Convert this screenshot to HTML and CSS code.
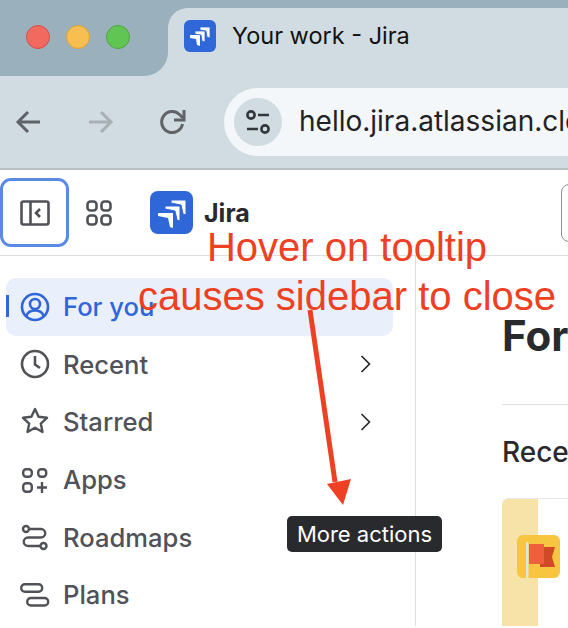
FILE: index.html
```html
<!DOCTYPE html>
<html lang="en">
<head>
    <meta charset="UTF-8">
    <meta name="viewport" content="width=device-width, initial-scale=1.0">
    <title>Your work - Jira</title>
    <link rel="stylesheet" href="styles.css">
</head>
<body>
    <!-- Browser chrome -->
    <div class="tabstrip">
        <div class="traffic">
            <span class="light red"></span>
            <span class="light yellow"></span>
            <span class="light green"></span>
        </div>
        <div class="tab-wrap">
            <div class="tab">
                <svg class="favicon" viewBox="0 0 32 32">
                    <rect width="32" height="32" rx="6" fill="#2f66d8"/>
                    <path d="M6 15h10v11l-3-1-1-6-6-1z" fill="#fff"/>
                    <path d="M11 11h10v11l-3-1-1-6-6-1z" fill="#fff" stroke="#2f66d8" stroke-width=".8"/>
                    <path d="M16 7h10v11l-3-1-1-6-6-1z" fill="#fff" stroke="#2f66d8" stroke-width=".8"/>
                </svg>
                <span class="tab-title">Your work - Jira</span>
            </div>
        </div>
    </div>
    <div class="toolbar">
        <svg class="nav-arrow" viewBox="0 0 28 28"><path d="M25 14H4M13 4L3 14l10 10" fill="none" stroke="#5f6368" stroke-width="3"/></svg>
        <svg class="nav-arrow fwd" viewBox="0 0 28 28"><path d="M3 14h21M15 4l10 10-10 10" fill="none" stroke="#a8afb5" stroke-width="3"/></svg>
        <svg class="nav-arrow reload" viewBox="0 0 28 28"><path d="M23.500 16a10.500 10.500 0 1 1-3-9.500L24 10" fill="none" stroke="#5f6368" stroke-width="3"/><path d="M25 2v10H15" fill="none" stroke="#5f6368" stroke-width="3"/></svg>
        <div class="urlbar">
            <span class="site-info">
                <svg viewBox="0 0 26 26" width="26" height="26" fill="none" stroke="#33373b" stroke-width="2.600">
                    <circle cx="6" cy="6" r="3.600"/><path d="M13 6h11M2 20h11"/><circle cx="20" cy="20" r="3.600"/>
                </svg>
            </span>
            <span class="url">hello.jira.atlassian.cloud</span>
        </div>
    </div>

    <!-- Jira top bar -->
    <header class="topbar">
        <button class="icon-btn focused">
            <svg viewBox="0 0 30 26" width="30" height="26" fill="none" stroke="#505258" stroke-width="2.600">
                <rect x="1.500" y="1.500" width="27" height="23" rx="2"/><path d="M10.500 2v22M20 9l-4 4 4 4"/>
            </svg>
        </button>
        <svg class="apps-icon" viewBox="0 0 26 26" fill="none" stroke="#505258" stroke-width="2.600">
            <rect x="1.500" y="1.500" width="9" height="9" rx="3"/><rect x="15.500" y="1.500" width="9" height="9" rx="3"/>
            <rect x="1.500" y="15.500" width="9" height="9" rx="3"/><rect x="15.500" y="15.500" width="9" height="9" rx="3"/>
        </svg>
        <svg class="logo" viewBox="0 0 43 43">
            <rect width="43" height="43" rx="8" fill="#2f66d8"/>
            <path d="M8 22h15v15l-3-1-2-9-10-2z" fill="#fff"/>
            <path d="M15 15h15v15l-3-1-2-9-10-2z" fill="#fff" stroke="#2f66d8"/>
            <path d="M21 9h15v15l-3-1-2-9-10-2z" fill="#fff" stroke="#2f66d8"/>
        </svg>
        <span class="brand">Jira</span>
        <div class="search-edge"></div>
    </header>

    <div class="content">
        <nav class="sidebar">
            <a class="nav-item active">
                <svg viewBox="0 0 30 30" fill="none" stroke="#2f66d8" stroke-width="2.600"><circle cx="15" cy="15" r="13"/><circle cx="15" cy="12" r="5"/><path d="M6.500 24c1-4 4-5.500 8.500-5.500s7.500 1.500 8.500 5.500"/></svg>
                <span>For you</span>
            </a>
            <a class="nav-item">
                <svg viewBox="0 0 30 30" fill="none" stroke="#505258" stroke-width="2.600"><circle cx="15" cy="15" r="13"/><path d="M15 7v8.500l5 3.500"/></svg>
                <span>Recent</span>
                <svg class="chevron" viewBox="0 0 11 18" fill="none" stroke="#292a2e" stroke-width="1.700"><path d="M1.500 1l8 8-8 8"/></svg>
            </a>
            <a class="nav-item">
                <svg viewBox="0 0 30 30" fill="none" stroke="#505258" stroke-width="2.400" stroke-linejoin="round"><path d="M15 2l3.600 7.800 8.400 1-6.200 5.800 1.700 8.400L15 20.800 7.500 25l1.700-8.400L3 10.800l8.400-1z"/></svg>
                <span>Starred</span>
                <svg class="chevron" viewBox="0 0 11 18" fill="none" stroke="#292a2e" stroke-width="1.700"><path d="M1.500 1l8 8-8 8"/></svg>
            </a>
            <a class="nav-item">
                <svg viewBox="0 0 30 30" fill="none" stroke="#505258" stroke-width="2.400"><rect x="3.200" y="4.200" width="8.600" height="7.600" rx="3"/><rect x="18.200" y="4.200" width="8" height="7.600" rx="3"/><rect x="3.200" y="18.200" width="8.600" height="8.600" rx="3"/><path d="M22 17v11M17 22.500h10"/></svg>
                <span>Apps</span>
            </a>
            <a class="nav-item">
                <svg viewBox="0 0 30 30" fill="none" stroke="#505258" stroke-width="2.400"><circle cx="6" cy="7" r="3"/><path d="M9 7h12a4.200 4.200 0 0 1 0 8.500H8a4.200 4.200 0 0 0 0 8.500h12.500"/><circle cx="23.500" cy="24" r="3"/></svg>
                <span>Roadmaps</span>
            </a>
            <a class="nav-item">
                <svg viewBox="0 0 30 30" fill="none" stroke="#505258" stroke-width="2.400"><rect x="1.200" y="4.200" width="21" height="7.500" rx="3.700"/><rect x="7.200" y="18" width="21" height="7.500" rx="3.700"/></svg>
                <span>Plans</span>
            </a>
        </nav>
        <main class="main">
            <h1>For you</h1>
            <hr class="divider">
            <h2>Recent spaces</h2>
            <div class="space-card">
                <div class="card-band"></div>
                <svg class="card-icon" viewBox="0 0 43 43">
                    <rect width="43" height="43" rx="6" fill="#f7c53f"/>
                    <path d="M23 12h15l-3 10 3 10H23z" fill="#d04a26"/>
                    <path d="M12 9h15v20H12z" fill="#ee5f3c"/>
                    <path d="M9 7h2.500v36H9z" fill="#dfe6e2"/>
                </svg>
            </div>
        </main>
    </div>

    <!-- Screenshot annotation on top of the page -->
    <div class="note">Hover on tooltip<br>causes sidebar to close</div>
    <svg class="note-arrow" viewBox="0 0 568 628">
        <path d="M310 310L335 482" stroke="#ee4023" stroke-width="5" fill="none"/>
        <path d="M327 484L351 479L343 505Z" fill="#ee4023"/>
    </svg>
    <div class="tooltip">More actions</div>
</body>
</html>
```

FILE: styles.css
```css
html, body {
    height: 100%;
}
body {
    position: relative;
    width: 568px;
    height: 628px;
    margin: 0;
    overflow: hidden;
    background-color: white;
    color: #292a2e;
    font-family: Inter, "Liberation Sans", sans-serif;
}

/* browser chrome */
.tabstrip {
    display: flex;
    height: 76px;
    background-color: #d1dce2;
}
.traffic {
    display: flex;
    flex: none;
    align-items: center;
    gap: 16px;
    width: 168px;
    height: 76px;
    padding-left: 26px;
    padding-bottom: 2px;
    box-sizing: border-box;
    background-color: #9bb0bd;
    border-bottom-right-radius: 24px;
}
.light {
    width: 24px;
    height: 24px;
    border-radius: 50%;
    box-sizing: border-box;
    border: 1px solid;
}
.red {
    background-color: #f26a5f;
    border-color: #cf4f48;
}
.yellow {
    background-color: #f6bf4f;
    border-color: #d9a03c;
}
.green {
    background-color: #61c554;
    border-color: #4ca640;
}
.tab-wrap {
    flex: 1;
    padding-top: 8px;
    background-color: #9bb0bd;
}
.tab {
    display: flex;
    align-items: flex-start;
    height: 68px;
    padding: 12px 0 0 16px;
    box-sizing: border-box;
    background-color: #d1dce2;
    border-top-left-radius: 20px;
}
.favicon {
    width: 32px;
    height: 32px;
    margin-right: 16px;
}
.tab-title {
    font-size: 23.5px;
    line-height: 32px;
    color: #111;
}
.toolbar {
    display: flex;
    align-items: center;
    height: 94px;
    padding: 0 0 0 15px;
    box-sizing: border-box;
    background-color: #d1dce2;
    border-bottom: 2px solid #b9bfc4;
}
.nav-arrow {
    flex: none;
    width: 28px;
    height: 28px;
    margin-right: 43px;
}
.fwd {
    margin-right: 45px;
}
.reload {
    margin-right: 37px;
}
.urlbar {
    display: flex;
    flex: 1;
    align-items: center;
    height: 68px;
    padding-left: 10px;
    overflow: hidden;
    background-color: #f3f7f9;
    border-radius: 34px 0 0 34px;
    white-space: nowrap;
}
.site-info {
    display: flex;
    flex: none;
    align-items: center;
    justify-content: center;
    width: 48px;
    height: 48px;
    margin-right: 17px;
    border-radius: 50%;
    background-color: #d1dce2;
}
.url {
    padding-bottom: 2px;
    font-size: 28px;
    color: #1f2226;
}

/* jira top bar */
.topbar {
    display: flex;
    align-items: center;
    height: 86px;
    box-sizing: border-box;
    border-bottom: 1px solid #dddee0;
}
.icon-btn {
    display: flex;
    flex: none;
    align-items: center;
    justify-content: center;
    width: 69px;
    height: 69px;
    padding: 0;
    background: none;
    border: 3px solid #5a8ae6;
    border-radius: 11px;
}
.apps-icon {
    flex: none;
    width: 26px;
    height: 26px;
    margin-left: 17px;
}
.logo {
    flex: none;
    width: 43px;
    height: 43px;
    margin-left: 38px;
}
.brand {
    margin-left: 11px;
    font-size: 25px;
    font-weight: 700;
}
.search-edge {
    width: 30px;
    height: 56px;
    margin-left: auto;
    margin-right: -25px;
    border: 1px solid #8c8f97;
    border-radius: 8px;
}

/* sidebar */
.content {
    display: flex;
    height: 370px;
}
.sidebar {
    flex: none;
    width: 416px;
    padding: 22px 22px 0 6px;
    box-sizing: border-box;
    border-right: 1px solid #dddee0;
}
.nav-item {
    display: flex;
    align-items: center;
    gap: 13px;
    height: 57.6px;
    padding: 0 22px 0 14px;
    font-size: 25.6px;
    font-weight: 500;
    color: #505258;
}
.nav-item svg {
    flex: none;
    width: 30px;
    height: 30px;
}
.nav-item .chevron {
    width: 11px;
    height: 18px;
    margin-left: auto;
}
.active {
    position: relative;
    color: #2f66d8;
    background-color: #e9f0fb;
    border-radius: 10px;
}
.active::before {
    content: "";
    position: absolute;
    left: 0;
    top: 17px;
    width: 3px;
    height: 22px;
    background-color: #2f66d8;
}

/* main column */
.main {
    flex: 1;
    min-width: 0;
    padding: 0 0 0 86px;
    overflow: hidden;
    white-space: nowrap;
}
.main h1 {
    margin: 55px 0 0;
    font-size: 42px;
    line-height: 50px;
    font-weight: 700;
}
.divider {
    height: 1px;
    margin: 43px 0 0;
    border: none;
    background-color: #dddee0;
}
.main h2 {
    margin: 30px 0 0;
    font-size: 28px;
    line-height: 34px;
    font-weight: 500;
}
.space-card {
    position: relative;
    height: 140px;
    margin-top: 29px;
    background-color: white;
    border-top: 1px solid #e6e7e9;
    border-top-left-radius: 6px;
}
.card-band {
    width: 36px;
    height: 100%;
    background-color: #f7e3a8;
    border-top-left-radius: 6px;
}
.card-icon {
    position: absolute;
    left: 15px;
    top: 36px;
    width: 43px;
    height: 43px;
}

/* annotation layer */
.note {
    position: absolute;
    left: 138px;
    top: 223px;
    width: 418px;
    font-family: "Liberation Sans", Arial, sans-serif;
    font-size: 40px;
    line-height: 49px;
    text-align: center;
    color: #ee4023;
    white-space: nowrap;
}
.note-arrow {
    position: absolute;
    left: 0;
    top: 0;
    width: 568px;
    height: 628px;
}
.tooltip {
    position: absolute;
    left: 287px;
    top: 516px;
    width: 155px;
    height: 36px;
    box-sizing: border-box;
    font-size: 22px;
    line-height: 36px;
    text-align: center;
    color: white;
    background-color: #292a2e;
    border-radius: 5px;
}
```
